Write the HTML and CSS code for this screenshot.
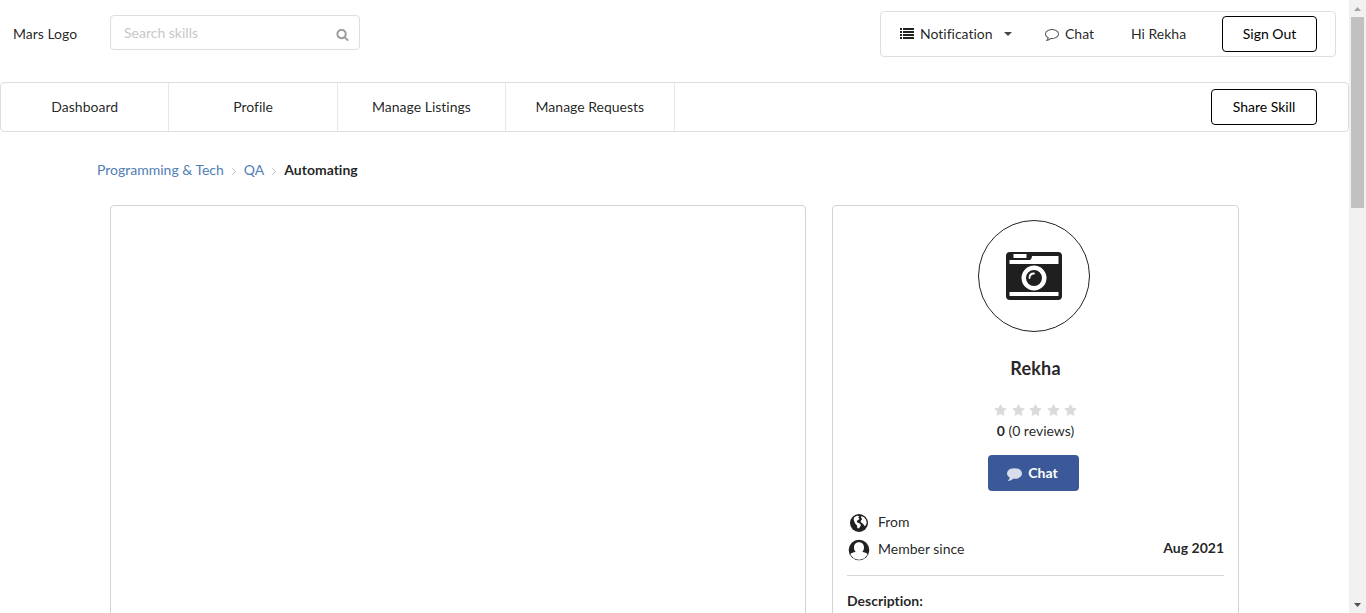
FILE: index.html
```html
<!DOCTYPE html>
<html lang="en">
<head>
<meta charset="utf-8">
<title>Service Detail</title>
<link rel="stylesheet" href="styles.css">
</head>
<body>
<svg class="defs" width="0" height="0" aria-hidden="true">
  <symbol id="star" viewBox="0 0 1792 1792"><path d="M1728 647q0 22-26 48l-363 354 86 500q1 7 1 20 0 21-10.5 35.5t-30.5 14.5q-19 0-40-12l-449-236-449 236q-22 12-40 12-21 0-31.5-14.5t-10.5-35.5q0-6 2-20l86-500-364-354q-25-27-25-48 0-37 56-46l502-73 225-455q19-41 49-41t49 41l225 455 502 73q56 9 56 46z"/></symbol>
</svg>
<div class="page">
  <header class="topbar">
    <span class="logo">Mars Logo</span>
    <div class="search">
      <input class="search-input" type="text" placeholder="Search skills">
      <svg class="search-icon" viewBox="0 0 1792 1792"><path d="M1216 832q0-185-131.5-316.5t-316.5-131.5-316.5 131.5-131.5 316.5 131.5 316.5 316.5 131.5 316.5-131.5 131.5-316.5zm512 832q0 52-38 90t-90 38q-54 0-90-38l-343-342q-179 124-399 124-143 0-273.5-55.5t-225-150-150-225-55.5-273.5 55.5-273.5 150-225 225-150 273.5-55.5 273.5 55.5 225 150 150 225 55.5 273.5q0 220-124 399l343 343q37 37 37 90z"/></svg>
    </div>
    <div class="account">
      <a class="notification">
        <svg class="list-icon" viewBox="0 0 14 11"><path d="M0 0h2v2H0zM0 3h2v2H0zM0 6h2v2H0zM0 9h2v2H0zM3 0h11v2H3zM3 3h11v2H3zM3 6h11v2H3zM3 9h11v2H3z"/></svg>
        <span>Notification</span>
        <svg class="caret" viewBox="0 0 8 4"><path d="M0 0h8L4 4z"/></svg>
      </a>
      <a class="chat-link">
        <svg class="comment-icon" viewBox="0 0 1792 1792"><path d="M896 384q-204 0-381.5 69.5t-282 187.5-104.5 255q0 112 71.5 213.5t201.5 175.5l87 50-27 96q-24 91-70 172 152-63 275-171l43-38 57 6q69 8 130 8 204 0 381.5-69.5t282-187.5 104.5-255-104.5-255-282-187.5-381.5-69.5zm896 512q0 174-120 321.5t-326 233-450 85.5q-70 0-145-8-198 175-460 242-49 14-114 22h-5q-15 0-27-10.5t-16-27.5v-1q-3-4-.5-12t2-10 4.5-9.5l6-9 7-8.5 8-9q7-8 31-34.5t34.5-38 31-39.5 32.5-51 27-59 26-76q-157-89-247.5-220t-90.5-281q0-174 120-321.5t326-233 450-85.5 450 85.5 326 233 120 321.5z"/></svg>
        <span>Chat</span>
      </a>
      <span class="greeting">Hi Rekha</span>
      <button class="outline-button sign-out">Sign Out</button>
    </div>
  </header>
  <nav class="menu">
    <a class="menu-item">Dashboard</a>
    <a class="menu-item">Profile</a>
    <a class="menu-item">Manage Listings</a>
    <a class="menu-item">Manage Requests</a>
    <button class="outline-button share">Share Skill</button>
  </nav>
  <div class="breadcrumb">
    <a class="crumb">Programming &amp; Tech</a>
    <svg class="chevron" viewBox="0 0 4 7"><path d="M.5.5l3 3-3 3"/></svg>
    <a class="crumb">QA</a>
    <svg class="chevron" viewBox="0 0 4 7"><path d="M.5.5l3 3-3 3"/></svg>
    <b>Automating</b>
  </div>
  <main class="content">
    <section class="card gallery"></section>
    <aside class="card seller">
      <div class="avatar">
        <svg class="camera" viewBox="0 0 56 48"><path fill-rule="evenodd" d="M4 0H52Q56 0 56 4V44Q56 48 52 48H4Q0 48 0 44V4Q0 0 4 0ZM7.500 2V6H20.500V2ZM26 4Q25.500 8 23.500 8H3.500V12H52.500V4ZM3.500 40V44H52.500V40ZM28 13.500A12.500 12.500 0 1 0 28 38.500A12.500 12.500 0 1 0 28 13.500ZM28 18A8 8 0 1 1 28 34A8 8 0 1 1 28 18Z"/><path class="glint" d="M23.500 26Q23.500 21.500 28 21.500"/></svg>
      </div>
      <h1 class="name">Rekha</h1>
      <div class="stars">
        <svg class="star"><use href="#star"/></svg>
        <svg class="star"><use href="#star"/></svg>
        <svg class="star"><use href="#star"/></svg>
        <svg class="star"><use href="#star"/></svg>
        <svg class="star"><use href="#star"/></svg>
      </div>
      <div class="reviews"><b>0</b> (0 reviews)</div>
      <button class="chat-button">
        <svg class="comment-icon" viewBox="0 0 1792 1792"><path d="M1792 896q0 174-120 321.500t-326 233-450 85.500q-70 0-145-8-198 175-460 242-49 14-114 22-17 2-30.500-9t-17.500-29v-1q-3-4-.5-12t2-10 4.500-9.500l6-9 7-8.500 8-9q7-8 31-34.500t34.500-38 31-39.500 32.500-51 27-59 26-76q-157-89-247.500-220t-90.500-281q0-174 120-321.500t326-233 450-85.500 450 85.500 326 233 120 321.500z"/></svg>
        <span>Chat</span>
      </button>
      <div class="facts">
        <div class="fact">
          <svg class="globe" viewBox="0 0 18 18"><circle cx="9" cy="9" r="9"/><path class="land" d="M4.200 3.200L7 1.700 9.300 2.200 8.300 3.700 9.500 4.700 8.300 6 6.800 6.800 7 8.300 9.300 9.300 11 11 10 13 8.500 14.500 7.300 14 7 11.500 5.300 9.800 4.300 7.500 3.600 5.500ZM11.500 2L14 3.300 16 5.700 16.700 8.500 16 11 14.700 12.200 13.200 10 12 9 10.500 8 11.300 6 12.300 5 11 3.700Z"/></svg>
          <span>From</span>
        </div>
        <div class="fact">
          <svg class="person" viewBox="0 0 22 22"><circle cx="11" cy="11" r="10.300"/><path class="figure" d="M11 3.300c3.200 0 5 2.200 5 5.200 0 1.800-.6 3.300-1.700 4.400 2.500.2 4.200.9 5.300 2.200A9.400 9.400 0 0 1 2.400 15.100c1.100-1.300 2.800-2 5.300-2.200C6.600 11.800 6 10.300 6 8.500c0-3 1.800-5.200 5-5.200Z"/></svg>
          <span>Member since</span>
          <b class="joined">Aug 2021</b>
        </div>
      </div>
      <b class="description">Description:</b>
    </aside>
  </main>
</div>
<div class="scrollbar">
  <svg class="arrow up" viewBox="0 0 7 4"><path d="M0 4h7L3.500 0z"/></svg>
  <div class="thumb"></div>
  <svg class="arrow down" viewBox="0 0 7 4"><path d="M0 0h7L3.500 4z"/></svg>
</div>
</body>
</html>
```
FILE: styles.css
```css
* { box-sizing: border-box; }
body {
  margin: 0;
  display: flex;
  height: 613px;
  overflow: hidden;
  background: #fff;
  color: rgba(0, 0, 0, .87);
  font: 14px/20px Lato, "Liberation Sans", sans-serif;
  font-variant-ligatures: none;
}
svg { display: block; flex: none; fill: currentColor; }
.defs { position: absolute; }
button { font: inherit; padding: 0; }
.page { width: 1349px; height: 613px; overflow: hidden; flex: none; }

.topbar { display: flex; height: 82px; padding: 11px 13px 0; align-items: flex-start; }
.logo { width: 97px; padding-top: 13px; }
.search {
  display: flex;
  align-items: center;
  width: 250px;
  height: 35px;
  margin-top: 4px;
  padding: 0 10px 0 13px;
  border: 1px solid #dededf;
  border-radius: 4px;
}
.search-input { flex: 1; min-width: 0; padding: 0; border: 0; outline: 0; font: inherit; background: none; }
.search-input::placeholder { color: #c7c7c7; }
.search-icon { width: 13px; height: 13px; margin-top: 3px; color: #999; }
.account {
  display: flex;
  align-items: center;
  width: 456px;
  height: 46px;
  margin-left: auto;
  padding: 0 18px 0 19px;
  border: 1px solid #dededf;
  border-radius: 4px;
}
.notification, .chat-link { display: flex; align-items: center; }
.notification { width: 145px; }
.list-icon { width: 14px; height: 11px; margin: 0 6px 1px 0; }
.caret { width: 8px; height: 4px; margin-left: 11px; color: #444; }
.chat-link { width: 86px; }
.account .comment-icon { width: 14px; height: 14px; margin-right: 6px; color: #555; }
.outline-button { height: 36px; background: #fff; color: #000; border: 1px solid #000; border-radius: 4px; }
.sign-out { width: 95px; margin-left: auto; }

.menu {
  display: flex;
  align-items: stretch;
  height: 50px;
  border: 1px solid #dededf;
  border-radius: 4px;
}
.menu-item {
  width: 168.400px;
  display: flex;
  align-items: center;
  justify-content: center;
  border-right: 1px solid #e8e8e8;
}
.share { width: 106px; margin: 6px 31px 0 auto; }

.breadcrumb { display: flex; align-items: center; height: 20px; margin: 28px 0 0 97px; }
.crumb { color: #4f80b5; }
.chevron { width: 4px; height: 7px; margin: 2px 8px 0; fill: none; stroke: #bbb; }

.content { display: flex; gap: 26px; margin: 25px 0 0 110px; }
.card { border: 1px solid #d4d4d5; border-radius: 4px; height: 500px; }
.gallery { width: 696px; }
.seller { width: 407px; padding: 14px; display: flex; flex-direction: column; align-items: center; }
.avatar {
  display: flex;
  align-items: center;
  justify-content: center;
  width: 112px;
  height: 112px;
  margin-right: 4px;
  border: 1px solid #222;
  border-radius: 50%;
  flex: none;
}
.camera { width: 56px; height: 48px; color: #1f1f1f; }
.glint { fill: none; stroke: #fff; stroke-width: 1.800; stroke-linecap: round; }
.name { margin: 24px 0 0; font-size: 18px; line-height: 24px; font-weight: 700; letter-spacing: .2px; }
.stars { display: flex; gap: 4.500px; margin-top: 24px; }
.star { width: 13px; height: 13px; color: #dadada; }
.reviews { margin-top: 4px; }
.chat-button {
  display: flex;
  align-items: center;
  justify-content: center;
  width: 91px;
  height: 36px;
  flex: none;
  margin: 14px 4px 0 0;
  padding-right: 2px;
  border: 0;
  border-radius: 4px;
  background: #3b5998;
  color: #fff;
  font-weight: 700;
}
.chat-button .comment-icon { width: 15px; height: 15px; margin-right: 6px; opacity: .8; }
.facts { align-self: stretch; flex: none; height: 68px; margin-top: 17px; border-bottom: 1px solid #d6d6d7; }
.fact { display: flex; align-items: center; height: 27px; }
.globe { width: 18px; height: 18px; margin: 3px 10px 0 3px; }
.person { width: 22px; height: 22px; margin: 2px 8px 0 1px; }
.land, .figure { fill: #fff; }
.joined { margin: -2px 0 0 auto; }
.description { align-self: flex-start; margin-top: 15px; }

.scrollbar {
  display: flex;
  flex-direction: column;
  align-items: center;
  width: 17px;
  height: 613px;
  padding: 7px 0 6px;
  background: #f1f1f1;
}
.arrow { width: 7px; height: 4px; color: #505050; }
.up { color: #a3a3a3; }
.thumb { width: 13px; height: 191px; margin-top: 6px; background: #c1c1c1; }
.down { margin-top: auto; }
```
